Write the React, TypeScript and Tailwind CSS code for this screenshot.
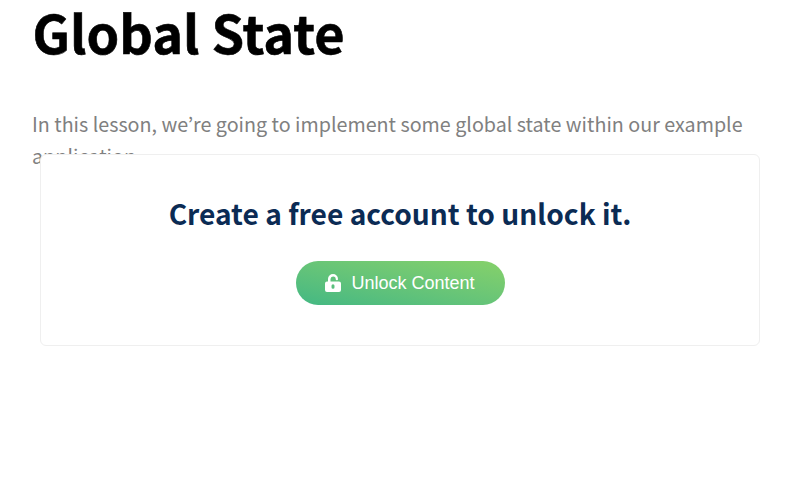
export default function App() {
  return (
    <main className="h-[500px] bg-white px-8 font-['Noto_Sans_CJK_KR','Noto_Sans',sans-serif]">
      <h1 className="h-[108px] pl-[0.5px] text-[52.3px] leading-[63px] font-bold text-black whitespace-nowrap [-webkit-text-stroke:0.6px_black]">Global State</h1>
      <p className="h-[65px] whitespace-nowrap text-[19.72px] leading-[32px] text-[#808080]">In this lesson, we’re going to implement some global state within our example<br />application.</p>
      <section className="relative mx-2 -mt-[19px] flex h-[192px] flex-col items-center rounded-md border border-[#efefef] bg-white pt-[38px]">
        <h2 className="text-[28.15px] leading-[40px] font-bold text-[#0b2b54] whitespace-nowrap">Create a free account to unlock it.</h2>
        <button className="mt-[28px] flex h-[44px] w-[209px] items-center justify-center rounded-full bg-linear-to-tr from-[#42b883] to-[#86d169] font-['Liberation_Sans',sans-serif] text-[18px] text-white">
          <svg className="mr-[10px]" width="16" height="18" viewBox="0 0 16 18" fill="currentColor" fillRule="evenodd"><path d="M3 7.5V5a5 5 0 0 1 10 0a1.1 1.1 0 0 1-2.300 0.200a2.600 2.600 0 0 0-5.200-.2v2.500H14a2 2 0 0 1 2 2V16a2 2 0 0 1-2 2H2a2 2 0 0 1-2-2V9.500a2 2 0 0 1 2-2Zm5 2.800a1.500 1.500 0 0 0-1.500 1.500v1.500a1.500 1.500 0 0 0 3 0v-1.500A1.500 1.500 0 0 0 8 10.300Z"/></svg>
          Unlock Content
        </button>
      </section>
    </main>
  );
}
